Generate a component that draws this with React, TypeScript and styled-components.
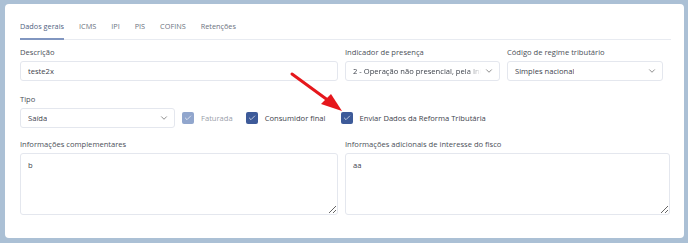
import React from "react";
import styled, { createGlobalStyle } from "styled-components";
import { ChevronDown, Check } from "lucide-react";

const GlobalStyle = createGlobalStyle`
  html, body {
    margin: 0;
    padding: 0;
    background: #abc0d5;
  }
  * { box-sizing: border-box; }
`;

const Page = styled.div`
  width: 688px;
  height: 243px;
  padding: 4px 4px 5px 5px;
  font-family: "Open Sans", "Liberation Sans", sans-serif;
`;

const Card = styled.div`
  position: relative;
  height: 100%;
  background: #ffffff;
  border-radius: 4px;
  padding: 14px 13px 0 15px;
`;

const Tabs = styled.div`
  display: flex;
  gap: 15px;
  border-bottom: 1px solid #e8ebf1;
`;

const Tab = styled.div<{ $active?: boolean }>`
  font-size: 7.3px;
  line-height: 11px;
  color: ${(p) => (p.$active ? "#4f5f82" : "#6b7280")};
  padding: 3px 0 6px;
  margin-bottom: -1px;
  border-bottom: 2px solid ${(p) => (p.$active ? "#8196c0" : "transparent")};
`;

const Row = styled.div<{ $cols: string; $top: number }>`
  display: grid;
  grid-template-columns: ${(p) => p.$cols};
  column-gap: 7px;
  margin-top: ${(p) => p.$top}px;
  align-items: end;
`;

const Field = styled.div`
  display: flex;
  flex-direction: column;
`;

const Label = styled.div`
  font-size: 7.6px;
  color: #4b4f58;
  height: 10px;
  line-height: 10px;
  margin-bottom: 4px;
`;

const Input = styled.div`
  height: 20px;
  border: 1px solid #e4e7ee;
  border-radius: 3px;
  display: flex;
  align-items: center;
  padding: 0 7px;
  font-size: 7.6px;
  color: #3e434c;
`;

const Select = styled(Input)`
  justify-content: space-between;
  padding-right: 5px;
  white-space: nowrap;
  overflow: hidden;
  svg { flex-shrink: 0; color: #555; }
`;

const SelectText = styled.span<{ $fade?: boolean }>`
  overflow: hidden;
  max-width: 128px;
  ${(p) =>
    p.$fade &&
    `-webkit-mask-image: linear-gradient(to right, #000 90%, transparent);
     mask-image: linear-gradient(to right, #000 90%, transparent);`}
`;

const Checks = styled.div`
  display: flex;
  align-items: center;
  height: 20px;
`;

const CheckItem = styled.label<{ $disabled?: boolean; $gap: number }>`
  display: flex;
  align-items: center;
  gap: 7px;
  margin-right: ${(p) => p.$gap}px;
  font-size: 7.6px;
  color: ${(p) => (p.$disabled ? "#9aa0aa" : "#3e434c")};
`;

const Box = styled.span<{ $disabled?: boolean }>`
  width: 12px;
  height: 12px;
  border-radius: 2px;
  background: ${(p) => (p.$disabled ? "#91a6cd" : "#3d5a99")};
  display: flex;
  align-items: center;
  justify-content: center;
  color: #fff;
`;

const TextArea = styled.textarea`
  height: 62px;
  border: 1px solid #e4e7ee;
  border-radius: 3px;
  padding: 6px 7px;
  font-family: "Open Sans", "Liberation Sans", sans-serif;
  font-size: 7.6px;
  color: #3e434c;
  outline: none;
  resize: both;
  width: 100%;
`;

const Arrow = styled.svg`
  position: absolute;
  left: 280px;
  top: 62px;
  pointer-events: none;
`;

export default function App() {
  return (
    <>
      <GlobalStyle />
      <Page>
        <Card>
          <Tabs>
            <Tab $active>Dados gerais</Tab>
            <Tab>ICMS</Tab>
            <Tab>IPI</Tab>
            <Tab>PIS</Tab>
            <Tab>COFINS</Tab>
            <Tab>Retenções</Tab>
          </Tabs>

          <Row $cols="318px 155px 156px" $top={7}>
            <Field>
              <Label>Descrição</Label>
              <Input>teste2x</Input>
            </Field>
            <Field>
              <Label>Indicador de presença</Label>
              <Select>
                <SelectText $fade>2 - Operação não presencial, pela Internet</SelectText>
                <ChevronDown size={10} strokeWidth={1.6} />
              </Select>
            </Field>
            <Field>
              <Label>Código de regime tributário</Label>
              <Select>
                <SelectText>Simples nacional</SelectText>
                <ChevronDown size={10} strokeWidth={1.6} />
              </Select>
            </Field>
          </Row>

          <Row $cols="155px 1fr" $top={13}>
            <Field>
              <Label>Tipo</Label>
              <Select>
                <SelectText>Saída</SelectText>
                <ChevronDown size={10} strokeWidth={1.6} />
              </Select>
            </Field>
            <Checks>
              <CheckItem $disabled $gap={13}>
                <Box $disabled><Check size={8} strokeWidth={2} /></Box>
                Faturada
              </CheckItem>
              <CheckItem $gap={15}>
                <Box><Check size={8} strokeWidth={2} /></Box>
                Consumidor final
              </CheckItem>
              <CheckItem $gap={0}>
                <Box><Check size={8} strokeWidth={2} /></Box>
                Enviar Dados da Reforma Tributária
              </CheckItem>
            </Checks>
          </Row>

          <Row $cols="318px 325px" $top={11}>
            <Field>
              <Label>Informações complementares</Label>
              <TextArea readOnly value="b" />
            </Field>
            <Field>
              <Label>Informações adicionais de interesse do fisco</Label>
              <TextArea readOnly value="aa" />
            </Field>
          </Row>

          <Arrow width="70" height="52" viewBox="0 0 70 52">
            <line x1="7" y1="8" x2="44" y2="35" stroke="#e5171c" strokeWidth="3" strokeLinecap="round" />
            <polygon points="57,45 36,38 46,28" fill="#e5171c" />
          </Arrow>
        </Card>
      </Page>
    </>
  );
}
